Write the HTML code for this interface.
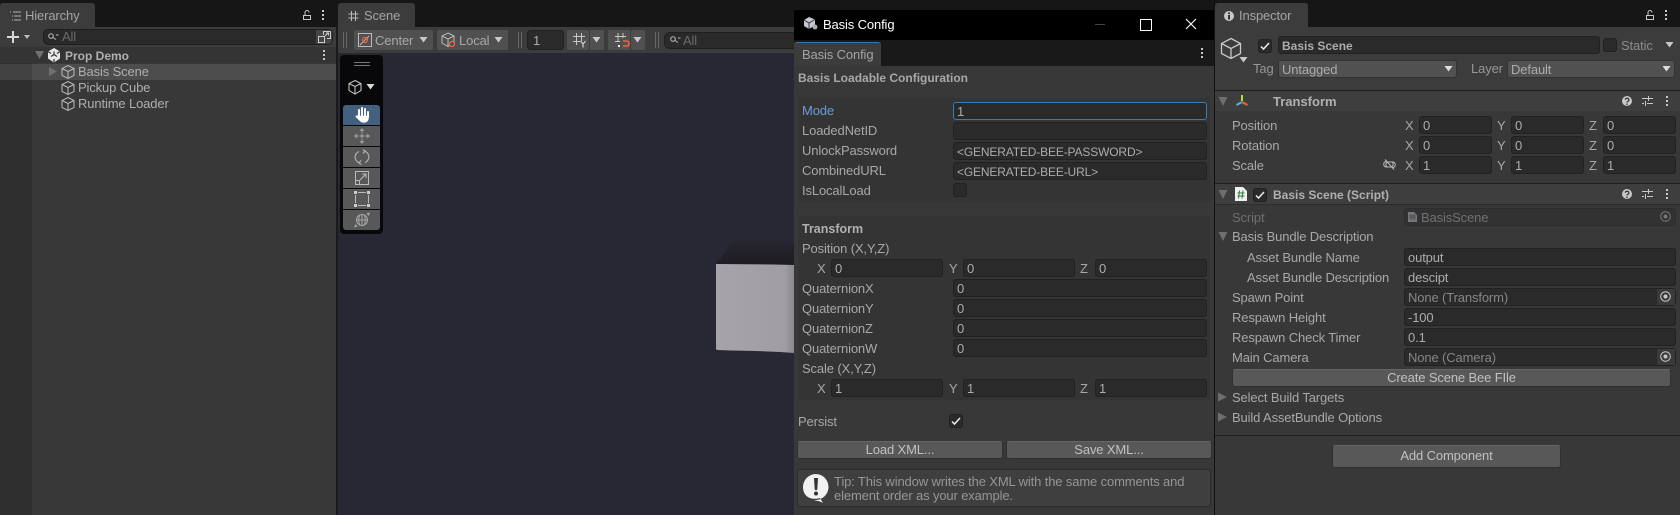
<!DOCTYPE html>
<html><head><meta charset="utf-8"><title>Unity Editor</title>
<style>
html,body{margin:0;padding:0;background:#161616}
#r{position:relative;width:1680px;height:515px;overflow:hidden;background:#161616;font:13px "Liberation Sans",sans-serif;letter-spacing:-.13px;color:#a8a8a8}
#r div,#r svg{position:absolute}
.t{white-space:nowrap;height:16px;line-height:16px;margin-top:-7px}
.b{font-weight:bold;font-size:12px;letter-spacing:0}
.f{background:#2a2a2a;border:1px solid #212121;border-radius:3px;box-sizing:border-box;height:18px;line-height:18px;padding-left:3px;white-space:nowrap;color:#acacac}
.u{font-size:12px;letter-spacing:-.15px}
.d{background:#585858;border:1px solid #303030;border-top-color:#656565;border-radius:3px;box-sizing:border-box;text-align:center;line-height:16px;color:#c0c0c0}
.c{background:#2a2a2a;border:1px solid #212121;border-radius:3px;box-sizing:border-box;width:14px;height:14px}
.tab{background:#3c3c3c;border-radius:3px 3px 0 0}
.tb{background:#505050;border-radius:2px}
.ov{background:#585858;left:343px;width:37px;height:20px}
</style></head><body><div id="r">

<!-- HIERARCHY -->
<div style="left:0;top:27px;width:336px;height:488px;background:#383838"></div>
<div style="left:0;top:47px;width:32px;height:468px;background:#2f2f2f"></div>
<div style="left:0;top:27px;width:336px;height:20px;background:#3c3c3c"></div>
<div class="tab" style="left:0;top:3px;width:95px;height:24px"></div>
<svg style="left:9px;top:10px" width="12" height="12" fill="none" stroke="#b0b0b0"><path d="M1 2h1M4 2h8M3 6h1M5 6h7M3 10h1M5 10h7"/></svg>
<div class="t" style="left:25px;top:15px;color:#a4a4a4">Hierarchy</div>
<svg style="left:301px;top:9px" width="12" height="12" fill="none" stroke="#c8c8c8"><path d="M2.500 6.500h7v4h-7zM4 6V3.500a2 2 0 0 1 4 0"/></svg>
<svg style="left:321px;top:10px" width="4" height="11" fill="#c8c8c8"><rect x="1" y="0" width="2" height="2"/><rect x="1" y="4" width="2" height="2"/><rect x="1" y="8" width="2" height="2"/></svg>
<svg style="left:6px;top:30px" width="26" height="14" fill="#d8d8d8"><path d="M1 6h5V1h2v5h5v2H8v5H6V8H1z"/><path d="M18 5h6l-3 4z" fill="#bbb"/></svg>
<div style="left:43px;top:29px;width:290px;height:16px;background:#2a2a2a;border:1px solid #1f1f1f;border-radius:5px;box-sizing:border-box"></div>
<svg style="left:47px;top:32px" width="12" height="10" fill="none" stroke="#bbb"><circle cx="4" cy="4" r="2.300"/><path d="M6 5.500l3 2M9 3h2.500"/></svg>
<div class="t" style="left:62px;top:36px;color:#6a6a6a">All</div>
<div style="left:316px;top:30px;width:16px;height:14px;background:#454545;border-radius:0 4px 4px 0"></div>
<svg style="left:318px;top:31px" width="13" height="12" fill="none" stroke="#ccc"><path d="M5.500 4V.5h7v7H9M.5 5.500h6v6h-6zM7 5l3-3M8 2h2.500v2.500"/></svg>
<div style="left:0;top:47px;width:336px;height:16px;background:#343434"></div>
<svg style="left:34px;top:50px" width="11" height="10"><path d="M1 1h9L5.500 9z" fill="#707070"/></svg>
<svg style="left:47px;top:48px" width="14" height="15"><path d="M7 0l6 3.500v7L7 14.500 1 10.500v-7z" fill="#e8e8e8"/><path d="M7 3.500v3l-3 2M7 6.500l3 2M1 3.500l3 2M13 3.500l-3 2M7 14v-3" stroke="#333" stroke-width="1.200" fill="none"/></svg>
<div class="t b" style="left:65px;top:55px;color:#b0b0b0">Prop Demo</div>
<svg style="left:322px;top:50px" width="4" height="11" fill="#c8c8c8"><rect x="1" y="0" width="2" height="2"/><rect x="1" y="4" width="2" height="2"/><rect x="1" y="8" width="2" height="2"/></svg>
<div style="left:0;top:64px;width:32px;height:16px;background:#424242"></div>
<div style="left:32px;top:64px;width:304px;height:16px;background:#4d4d4d"></div>
<svg style="left:48px;top:66px" width="10" height="11"><path d="M1 1l8 4.500L1 10z" fill="#707070"/></svg>
<svg style="left:61px;top:64px" width="14" height="16" fill="none" stroke="#bcbcbc"><path d="M7 1.500l6 3v7l-6 3-6-3v-7zM1 4.500l6 3 6-3M7 7.500v7"/></svg>
<div class="t" style="left:78px;top:71px;color:#aeaeae">Basis Scene</div>
<svg style="left:61px;top:80px" width="14" height="16" fill="none" stroke="#bcbcbc"><path d="M7 1.500l6 3v7l-6 3-6-3v-7zM1 4.500l6 3 6-3M7 7.500v7"/></svg>
<div class="t" style="left:78px;top:87px;color:#aeaeae">Pickup Cube</div>
<svg style="left:61px;top:96px" width="14" height="16" fill="none" stroke="#bcbcbc"><path d="M7 1.500l6 3v7l-6 3-6-3v-7zM1 4.500l6 3 6-3M7 7.500v7"/></svg>
<div class="t" style="left:78px;top:103px;color:#aeaeae">Runtime Loader</div>
<div style="left:336px;top:27px;width:2px;height:488px;background:#1a1a1a"></div>

<!-- SCENE -->
<div class="tab" style="left:338px;top:3px;width:77px;height:24px"></div>
<svg style="left:348px;top:10px" width="11" height="12" fill="none" stroke="#bbb"><path d="M3.500 1v10M7.500 1v10M.5 4h10M.5 8h10"/></svg>
<div class="t" style="left:364px;top:15px;color:#a4a4a4">Scene</div>
<div style="left:338px;top:27px;width:456px;height:26px;background:#3c3c3c"></div>
<div style="left:338px;top:53px;width:456px;height:462px;background:#282734"></div>
<div style="left:343px;top:32px;width:1px;height:16px;background:#666"></div><div style="left:346px;top:32px;width:1px;height:16px;background:#666"></div>
<div class="tb" style="left:354px;top:30px;width:79px;height:20px"></div>
<svg style="left:358px;top:32px" width="15" height="16" fill="none"><rect x=".5" y="1.500" width="13" height="13" stroke="#bbb"/><path d="M2 13L11 4" stroke="#bbb"/><circle cx="7" cy="8" r="2.500" stroke="#f0643c" stroke-width="1.200"/></svg>
<div class="t" style="left:375px;top:40px;color:#a8a8a8">Center</div>
<svg style="left:419px;top:37px" width="9" height="6"><path d="M.5 0h8L4.500 5.500z" fill="#c8c8c8"/></svg>
<div class="tb" style="left:437px;top:30px;width:71px;height:20px"></div>
<svg style="left:441px;top:32px" width="15" height="16" fill="none"><path d="M7 1l6 3v7l-6 3.500-6-3.500V4zM1 4l6 3 6-3M7 7v7" stroke="#bbb"/><circle cx="11" cy="12" r="2.500" stroke="#f0643c" stroke-width="1.200" fill="#505050"/></svg>
<div class="t" style="left:459px;top:40px;color:#a8a8a8">Local</div>
<svg style="left:494px;top:37px" width="9" height="6"><path d="M.5 0h8L4.500 5.500z" fill="#c8c8c8"/></svg>
<div style="left:518px;top:32px;width:1px;height:16px;background:#666"></div><div style="left:521px;top:32px;width:1px;height:16px;background:#666"></div>
<div class="f" style="left:527px;top:30px;width:37px;height:20px;line-height:20px;padding-left:5px;border-radius:4px">1</div>
<div class="tb" style="left:567px;top:30px;width:22px;height:20px"></div><div class="tb" style="left:590px;top:30px;width:14px;height:20px"></div>
<svg style="left:572px;top:33px" width="16" height="15" fill="none" stroke="#c8c8c8"><path d="M4.500 0v12M9.500 0v8M1 3.500h12M1 8.500h7"/><path d="M8.500 8l2.500 3 2.500-3M11 11v3.500" stroke-width="1.300"/></svg>
<svg style="left:592px;top:37px" width="9" height="6"><path d="M.5 0h8L4.500 5.500z" fill="#c8c8c8"/></svg>
<div class="tb" style="left:608px;top:30px;width:22px;height:20px"></div><div class="tb" style="left:631px;top:30px;width:14px;height:20px"></div>
<svg style="left:613px;top:33px" width="17" height="15" fill="none"><path d="M5 0v9M10 0v5M2 3.500h11M2 8.500h5" stroke="#c8c8c8"/><path d="M10 8h3.500a2.500 2.500 0 0 1 0 5H10" stroke="#f0643c" stroke-width="1.600"/><rect x="5" y="12" width="2" height="2" fill="#eee"/></svg>
<svg style="left:633px;top:37px" width="9" height="6"><path d="M.5 0h8L4.500 5.500z" fill="#c8c8c8"/></svg>
<div style="left:655px;top:32px;width:1px;height:16px;background:#666"></div><div style="left:658px;top:32px;width:1px;height:16px;background:#666"></div>
<div style="left:664px;top:32px;width:140px;height:17px;background:#2a2a2a;border:1px solid #1f1f1f;border-radius:6px;box-sizing:border-box"></div>
<svg style="left:669px;top:35px" width="12" height="10" fill="none" stroke="#bbb"><circle cx="4" cy="4" r="2.300"/><path d="M6 5.500l3 2M9 3h2.500"/></svg>
<div class="t" style="left:683px;top:40px;color:#6a6a6a">All</div>

<!-- overlay toolbar -->
<div style="left:340px;top:55px;width:43px;height:179px;background:#08080a;border-radius:4px"></div>
<div style="left:354px;top:62px;width:16px;height:1px;background:#777"></div><div style="left:354px;top:65px;width:16px;height:1px;background:#777"></div>
<svg style="left:347px;top:79px" width="16" height="16" fill="none" stroke="#d0d0d0"><path d="M8 1.500l6 3v7l-6 3.500-6-3.500v-7zM2 4.500l6 3 6-3M8 7.500V15"/></svg>
<svg style="left:366px;top:84px" width="9" height="6"><path d="M.5 0h8L4.500 5.500z" fill="#d8d8d8"/></svg>
<div class="ov" style="top:105px;background:#43607f;border-radius:3px 3px 0 0"></div>
<div class="ov" style="top:126px"></div><div class="ov" style="top:147px"></div><div class="ov" style="top:168px"></div><div class="ov" style="top:189px"></div><div class="ov" style="top:210px;border-radius:0 0 3px 3px"></div>
<svg style="left:354px;top:106px" width="16" height="18" fill="#fff" stroke="#fff"><path d="M5 11V4M8 10V2M11 10V3M14 11V6" stroke-width="2" stroke-linecap="round" fill="none"/><path d="M4.500 10h10v2c0 3-2 4.500-4.500 4.500S6.500 15.500 5 14L1.500 10.500 3 9.500z" stroke-width=".5"/></svg>
<svg style="left:354px;top:128px" width="16" height="16" fill="none" stroke="#9a9a9a"><path d="M8 1.500v13M1.500 8h13" stroke-dasharray="4 5 4"/><path d="M8 0l2.500 3h-5zM8 16l2.500-3h-5zM0 8l3-2.500v5zM16 8l-3-2.500v5z" fill="#9a9a9a" stroke="none"/><rect x="6.500" y="6.500" width="3" height="3" fill="#9a9a9a" stroke="none"/></svg>
<svg style="left:354px;top:149px" width="16" height="16" fill="none" stroke="#b0b0b0" stroke-width="1.200"><path d="M5 2.500A6 6 0 0 0 6 14M11 13.500A6 6 0 0 0 10 2M9 .5L11 2 9 4.500M7 11.500L5 14l2.500 1.500"/></svg>
<svg style="left:354px;top:170px" width="16" height="16" fill="none" stroke="#bbb"><path d="M1.500 1.500h13v13h-13zM1.500 10.500h4v4M6 10l6-6M8 4h4v4"/></svg>
<svg style="left:354px;top:191px" width="16" height="16" fill="none" stroke="#bbb"><path d="M4 1.500h8M4 14.500h8M1.500 4v8M14.500 4v8"/><g fill="#ccc" stroke="none"><rect x="0" y="0" width="3" height="3"/><rect x="13" y="0" width="3" height="3"/><rect x="0" y="13" width="3" height="3"/><rect x="13" y="13" width="3" height="3"/></g></svg>
<svg style="left:353px;top:212px" width="18" height="16" fill="none" stroke="#a8a8a8"><circle cx="9" cy="8" r="5.500"/><path d="M9 3v10M4 8h10M6.500 3.500c-1 3-1 6 0 9M11.500 3.500c1 3 1 6 0 9"/><path d="M1 15.500l3.500-1-2-2.500zM17 .5l-3.500 1 2 2.500z" fill="#a8a8a8" stroke="none"/></svg>

<!-- cube -->
<svg style="left:712px;top:238px" width="82" height="120"><defs><linearGradient id="g" x1="0" x2="1" y1="0" y2="0"><stop offset="0" stop-color="#a7a4a9"/><stop offset=".88" stop-color="#a09da3"/><stop offset="1" stop-color="#8b898f"/></linearGradient><linearGradient id="h" x1="0" x2="0" y1="0" y2="1"><stop offset="0" stop-color="#262530"/><stop offset="1" stop-color="#1d1d21"/></linearGradient></defs><path d="M4 26L21 4l61 1v22z" fill="url(#h)"/><path d="M4 26l58 .500 20 .500v88L68 114l-24-1-25-.500-14-.500-1-1z" fill="url(#g)"/></svg>

<!-- DIALOG -->
<div style="left:794px;top:10px;width:420px;height:505px;background:#383838"></div>
<div style="left:794px;top:10px;width:420px;height:30px;background:#000"></div>
<div style="left:794px;top:40px;width:420px;height:26px;background:#191919"></div>
<svg style="left:803px;top:16px" width="15" height="15"><path d="M6 1l6 2.500v6L6 13 1 10V4z" fill="#c4c8d0"/><path d="M1 4l5 3 6-3.500M6 7v6" stroke="#334" fill="none"/><circle cx="12" cy="11" r="2.500" fill="#aaa"/></svg>
<div class="t" style="left:823px;top:24px;color:#fff">Basis Config</div>
<div style="left:1095px;top:24px;width:10px;height:1px;background:#444"></div>
<div style="left:1140px;top:19px;width:10px;height:10px;border:1px solid #fff"></div>
<svg style="left:1185px;top:18px" width="12" height="12" fill="none" stroke="#fff" stroke-width="1.100"><path d="M1 1l10 10M11 1L1 11"/></svg>
<div style="left:794px;top:42px;width:87px;height:24px;background:#3c3c3c;border-radius:3px 3px 0 0;border-top:1px solid #3a72b0;box-sizing:border-box"></div>
<div class="t" style="left:802px;top:54px;color:#a4a4a4">Basis Config</div>
<svg style="left:1200px;top:48px" width="4" height="11" fill="#c8c8c8"><rect x="1" y="0" width="2" height="2"/><rect x="1" y="4" width="2" height="2"/><rect x="1" y="8" width="2" height="2"/></svg>
<div class="t b" style="left:798px;top:77px;color:#a8a8a8">Basis Loadable Configuration</div>
<div style="left:798px;top:98px;width:412px;height:104px;background:#343434"></div>
<div style="left:798px;top:216px;width:412px;height:184px;background:#343434"></div>
<div class="t" style="left:802px;top:110px;color:#6c9cd8">Mode</div>
<div class="f" style="left:953px;top:102px;width:254px;border-color:#3a79bb;border-width:1px">1</div>
<div class="t" style="left:802px;top:130px">LoadedNetID</div>
<div class="f" style="left:953px;top:122px;width:254px"></div>
<div class="t" style="left:802px;top:150px">UnlockPassword</div>
<div class="f u" style="left:953px;top:142px;width:254px">&lt;GENERATED-BEE-PASSWORD&gt;</div>
<div class="t" style="left:802px;top:170px">CombinedURL</div>
<div class="f u" style="left:953px;top:162px;width:254px">&lt;GENERATED-BEE-URL&gt;</div>
<div class="t" style="left:802px;top:190px">IsLocalLoad</div>
<div class="c" style="left:953px;top:183px"></div>
<div class="t b" style="left:802px;top:228px;color:#b0b0b0;font-size:12.500px">Transform</div>
<div class="t" style="left:802px;top:248px">Position (X,Y,Z)</div>
<div class="t" style="left:817px;top:268px">X</div><div class="f" style="left:831px;top:259px;width:112px">0</div>
<div class="t" style="left:949px;top:268px">Y</div><div class="f" style="left:963px;top:259px;width:112px">0</div>
<div class="t" style="left:1080px;top:268px">Z</div><div class="f" style="left:1095px;top:259px;width:112px">0</div>
<div class="t" style="left:802px;top:288px">QuaternionX</div><div class="f" style="left:953px;top:279px;width:254px">0</div>
<div class="t" style="left:802px;top:308px">QuaternionY</div><div class="f" style="left:953px;top:299px;width:254px">0</div>
<div class="t" style="left:802px;top:328px">QuaternionZ</div><div class="f" style="left:953px;top:319px;width:254px">0</div>
<div class="t" style="left:802px;top:348px">QuaternionW</div><div class="f" style="left:953px;top:339px;width:254px">0</div>
<div class="t" style="left:802px;top:368px">Scale (X,Y,Z)</div>
<div class="t" style="left:817px;top:388px">X</div><div class="f" style="left:831px;top:379px;width:112px">1</div>
<div class="t" style="left:949px;top:388px">Y</div><div class="f" style="left:963px;top:379px;width:112px">1</div>
<div class="t" style="left:1080px;top:388px">Z</div><div class="f" style="left:1095px;top:379px;width:112px">1</div>
<div class="t" style="left:798px;top:421px">Persist</div>
<div class="c" style="left:949px;top:414px"></div>
<svg style="left:950px;top:415px" width="12" height="12" fill="none" stroke="#eee" stroke-width="1.500"><path d="M2 6.500l2.500 2.500L10 3"/></svg>
<div class="d" style="left:797px;top:441px;width:206px;height:18px">Load XML...</div>
<div class="d" style="left:1006px;top:441px;width:206px;height:18px">Save XML...</div>
<div style="left:797px;top:469px;width:414px;height:38px;background:#3f3f3f;border:1px solid #2a2a2a;border-radius:3px;box-sizing:border-box"></div>
<svg style="left:803px;top:474px" width="27" height="29"><path d="M13 0a13 13 0 1 1-1 26h-1c3 1 6 1 9 3l-3-5C6 27 0 21 0 13A13 13 0 0 1 13 0z" fill="#f2f2f2"/><path d="M11 4h4l-.8 12h-2.400z" fill="#333"/><circle cx="13" cy="19.500" r="2" fill="#333"/></svg>
<div class="t" style="left:834px;top:481px;color:#969696">Tip: This window writes the XML with the same comments and</div>
<div class="t" style="left:834px;top:495px;color:#969696">element order as your example.</div>
<div style="left:1214px;top:0;width:1px;height:515px;background:#111"></div>

<!-- INSPECTOR -->
<div style="left:1215px;top:27px;width:465px;height:488px;background:#383838"></div>
<div class="tab" style="left:1215px;top:3px;width:93px;height:24px"></div>
<svg style="left:1224px;top:11px" width="10" height="10"><circle cx="5" cy="5" r="5" fill="#c8c8c8"/><rect x="4" y="4" width="2" height="4.500" fill="#333"/><rect x="4" y="1.500" width="2" height="1.600" fill="#333"/></svg>
<div class="t" style="left:1239px;top:15px;color:#a4a4a4">Inspector</div>
<svg style="left:1644px;top:9px" width="12" height="12" fill="none" stroke="#c8c8c8"><path d="M2.500 6.500h7v4h-7zM4 6V3.500a2 2 0 0 1 4 0"/></svg>
<svg style="left:1664px;top:10px" width="4" height="11" fill="#c8c8c8"><rect x="1" y="0" width="2" height="2"/><rect x="1" y="4" width="2" height="2"/><rect x="1" y="8" width="2" height="2"/></svg>
<div style="left:1215px;top:27px;width:465px;height:63px;background:#3c3c3c"></div>
<svg style="left:1220px;top:37px" width="22" height="23" fill="none" stroke="#c8c8c8" stroke-width="1.300"><path d="M11 1.500l9.500 5v10L11 21.500l-9.500-5v-10zM1.500 6.500l9.500 5 9.500-5M11 11.500v10"/></svg>
<svg style="left:1239px;top:57px" width="9" height="6"><path d="M.5 0h8L4.500 5.500z" fill="#c8c8c8"/></svg>
<div class="c" style="left:1258px;top:39px"></div>
<svg style="left:1259px;top:40px" width="12" height="12" fill="none" stroke="#eee" stroke-width="1.500"><path d="M2 6.500l2.500 2.500L10 3"/></svg>
<div class="f b" style="left:1278px;top:36px;width:322px;height:18px">Basis Scene</div>
<div class="c" style="left:1603px;top:38px"></div>
<div class="t" style="left:1621px;top:45px;color:#8c8c8c">Static</div>
<svg style="left:1665px;top:42px" width="9" height="6"><path d="M.5 0h8L4.500 5.500z" fill="#c8c8c8"/></svg>
<div class="t" style="left:1253px;top:68px;color:#969696">Tag</div>
<div class="f" style="left:1278px;top:60px;width:179px;background:#515151;border-color:#333">Untagged</div>
<svg style="left:1444px;top:66px" width="9" height="6"><path d="M.5 0h8L4.500 5.500z" fill="#ddd"/></svg>
<div class="t" style="left:1471px;top:68px;color:#969696">Layer</div>
<div class="f" style="left:1507px;top:60px;width:168px;background:#515151;border-color:#333">Default</div>
<svg style="left:1662px;top:66px" width="9" height="6"><path d="M.5 0h8L4.500 5.500z" fill="#ddd"/></svg>

<div style="left:1215px;top:90px;width:465px;height:1px;background:#1f1f1f"></div>
<div style="left:1215px;top:91px;width:465px;height:20px;background:#3e3e3e"></div>
<svg style="left:1218px;top:97px" width="10" height="9"><path d="M.5 0h9L5 9z" fill="#6e6e6e"/></svg>
<svg style="left:1235px;top:94px" width="14" height="14" fill="none" stroke-width="2"><path d="M7 1v6" stroke="#a6e22e"/><path d="M7 8L1.500 11" stroke="#4cb4f0"/><path d="M7 8l5.500 3" stroke="#f0643c"/></svg>
<div class="t b" style="left:1273px;top:101px;color:#b0b0b0;font-size:13px">Transform</div>
<svg style="left:1622px;top:96px" width="10" height="10"><circle cx="5" cy="5" r="5" fill="#c8c8c8"/><path d="M3.300 3.800a1.800 1.600 0 1 1 2.500 1.500c-.6.3-.8.600-.8 1.200" stroke="#333" fill="none" stroke-width="1.200"/><rect x="4.300" y="7.500" width="1.400" height="1.400" fill="#333"/></svg>
<svg style="left:1642px;top:95px" width="11" height="12" fill="none" stroke="#c8c8c8"><path d="M0 3.500h6M7 3.500h4M0 8.500h2M5 8.500h6M6.500 1v5M3.500 6v5"/></svg>
<svg style="left:1665px;top:96px" width="4" height="11" fill="#c8c8c8"><rect x="1" y="0" width="2" height="2"/><rect x="1" y="4" width="2" height="2"/><rect x="1" y="8" width="2" height="2"/></svg>
<div class="t" style="left:1232px;top:125px">Position</div>
<div class="t" style="left:1405px;top:125px">X</div><div class="f" style="left:1419px;top:116px;width:73px">0</div>
<div class="t" style="left:1497px;top:125px">Y</div><div class="f" style="left:1511px;top:116px;width:73px">0</div>
<div class="t" style="left:1589px;top:125px">Z</div><div class="f" style="left:1603px;top:116px;width:73px">0</div>
<div class="t" style="left:1232px;top:145px">Rotation</div>
<div class="t" style="left:1405px;top:145px">X</div><div class="f" style="left:1419px;top:136px;width:73px">0</div>
<div class="t" style="left:1497px;top:145px">Y</div><div class="f" style="left:1511px;top:136px;width:73px">0</div>
<div class="t" style="left:1589px;top:145px">Z</div><div class="f" style="left:1603px;top:136px;width:73px">0</div>
<div class="t" style="left:1232px;top:165px">Scale</div>
<svg style="left:1383px;top:159px" width="13" height="11" fill="none" stroke="#bbb"><path d="M4 2.500H3a2.800 2.800 0 0 0 0 5.500h5a2.800 2.800 0 0 0 1-5M9 8.500h1a2.800 2.800 0 0 0 0-5.500H5a2.800 2.800 0 0 0-1 5M2 .5l9 10"/></svg>
<div class="t" style="left:1405px;top:165px">X</div><div class="f" style="left:1419px;top:156px;width:73px">1</div>
<div class="t" style="left:1497px;top:165px">Y</div><div class="f" style="left:1511px;top:156px;width:73px">1</div>
<div class="t" style="left:1589px;top:165px">Z</div><div class="f" style="left:1603px;top:156px;width:73px">1</div>

<div style="left:1215px;top:183px;width:465px;height:1px;background:#1f1f1f"></div>
<div style="left:1215px;top:184px;width:465px;height:20px;background:#3e3e3e"></div>
<svg style="left:1218px;top:190px" width="10" height="9"><path d="M.5 0h9L5 9z" fill="#6e6e6e"/></svg>
<svg style="left:1235px;top:187px" width="12" height="14"><path d="M0 0h8l4 4v10H0z" fill="#f0f0f0"/><path d="M4.500 3.500l-1 8M8 3.500l-1 8M2.500 6h7M2.500 9h7" stroke="#2e7d32" fill="none"/></svg>
<div class="c" style="left:1253px;top:188px"></div>
<svg style="left:1254px;top:189px" width="12" height="12" fill="none" stroke="#eee" stroke-width="1.500"><path d="M2 6.500l2.500 2.500L10 3"/></svg>
<div class="t b" style="left:1273px;top:194px;color:#b0b0b0">Basis Scene (Script)</div>
<svg style="left:1622px;top:189px" width="10" height="10"><circle cx="5" cy="5" r="5" fill="#c8c8c8"/><path d="M3.300 3.800a1.800 1.600 0 1 1 2.500 1.500c-.6.3-.8.600-.8 1.200" stroke="#333" fill="none" stroke-width="1.200"/><rect x="4.300" y="7.500" width="1.400" height="1.400" fill="#333"/></svg>
<svg style="left:1642px;top:188px" width="11" height="12" fill="none" stroke="#c8c8c8"><path d="M0 3.500h6M7 3.500h4M0 8.500h2M5 8.500h6M6.500 1v5M3.500 6v5"/></svg>
<svg style="left:1665px;top:189px" width="4" height="11" fill="#c8c8c8"><rect x="1" y="0" width="2" height="2"/><rect x="1" y="4" width="2" height="2"/><rect x="1" y="8" width="2" height="2"/></svg>
<div style="left:1215px;top:204px;width:465px;height:1px;background:#2c2c2c"></div>

<div class="t" style="left:1232px;top:217px;color:#6e6e6e">Script</div>
<div class="f" style="left:1404px;top:208px;width:272px;background:#323232;border-color:#2c2c2c"></div>
<svg style="left:1408px;top:212px" width="9" height="10"><path d="M0 0h6l3 3v7H0z" fill="#777"/><path d="M3 2v6M6 2v6M1 4h7M1 6h7" stroke="#445" fill="none" stroke-width=".7"/></svg>
<div class="t" style="left:1421px;top:217px;color:#707070">BasisScene</div>
<svg style="left:1660px;top:211px" width="11" height="11" fill="none" stroke="#777"><circle cx="5.500" cy="5.500" r="4.800"/><circle cx="5.500" cy="5.500" r="1.500" fill="#777"/></svg>
<svg style="left:1218px;top:232px" width="10" height="9"><path d="M.5 0h9L5 9z" fill="#6e6e6e"/></svg>
<div class="t" style="left:1232px;top:236px">Basis Bundle Description</div>
<div class="t" style="left:1247px;top:257px">Asset Bundle Name</div>
<div class="f" style="left:1404px;top:248px;width:272px">output</div>
<div class="t" style="left:1247px;top:277px">Asset Bundle Description</div>
<div class="f" style="left:1404px;top:268px;width:272px">descipt</div>
<div class="t" style="left:1232px;top:297px">Spawn Point</div>
<div class="f" style="left:1404px;top:288px;width:272px;color:#868686">None (Transform)</div>
<div style="left:1657px;top:289px;width:18px;height:16px;background:#3a3a3a"></div>
<svg style="left:1660px;top:291px" width="11" height="11" fill="none" stroke="#c8c8c8"><circle cx="5.500" cy="5.500" r="4.800"/><circle cx="5.500" cy="5.500" r="1.500" fill="#c8c8c8"/></svg>
<div class="t" style="left:1232px;top:317px">Respawn Height</div>
<div class="f" style="left:1404px;top:308px;width:272px">-100</div>
<div class="t" style="left:1232px;top:337px">Respawn Check Timer</div>
<div class="f" style="left:1404px;top:328px;width:272px">0.1</div>
<div class="t" style="left:1232px;top:357px">Main Camera</div>
<div class="f" style="left:1404px;top:348px;width:272px;color:#868686">None (Camera)</div>
<div style="left:1657px;top:349px;width:18px;height:16px;background:#3a3a3a"></div>
<svg style="left:1660px;top:351px" width="11" height="11" fill="none" stroke="#c8c8c8"><circle cx="5.500" cy="5.500" r="4.800"/><circle cx="5.500" cy="5.500" r="1.500" fill="#c8c8c8"/></svg>
<div class="d" style="left:1232px;top:369px;width:439px;height:18px">Create Scene Bee FIle</div>
<svg style="left:1218px;top:392px" width="9" height="10"><path d="M0 .5l9 4.500-9 4.500z" fill="#6e6e6e"/></svg>
<div class="t" style="left:1232px;top:397px">Select Build Targets</div>
<svg style="left:1218px;top:412px" width="9" height="10"><path d="M0 .5l9 4.500-9 4.500z" fill="#6e6e6e"/></svg>
<div class="t" style="left:1232px;top:417px">Build AssetBundle Options</div>
<div style="left:1215px;top:435px;width:465px;height:1px;background:#1f1f1f"></div>
<div class="d" style="left:1332px;top:445px;width:229px;height:23px;line-height:20px">Add Component</div>
</div></body></html>
